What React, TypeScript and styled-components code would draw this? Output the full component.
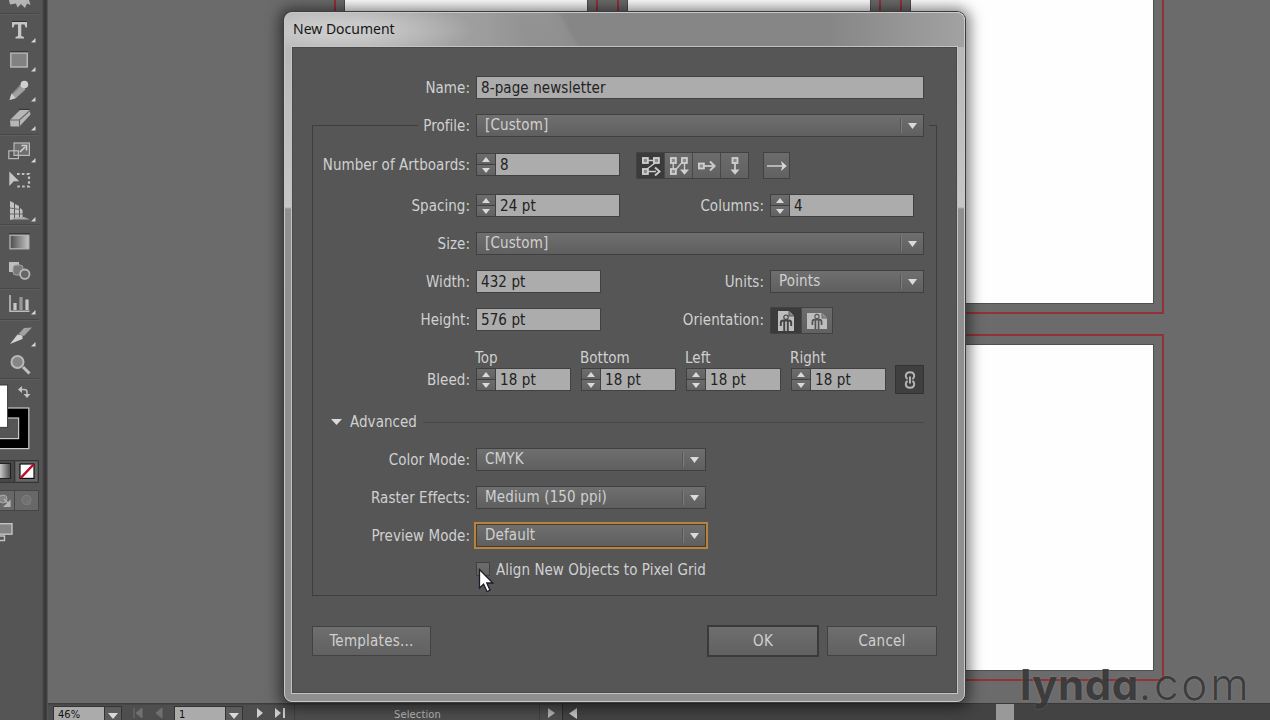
import React from "react";
import styled, { createGlobalStyle, css } from "styled-components";

const GlobalStyle = createGlobalStyle`
  *, *::before, *::after { box-sizing: border-box; }
  body { margin: 0; background: #6b6b6b; overflow: hidden; }
`;

const Screen = styled.div`
  position: relative;
  width: 1270px;
  height: 720px;
  display: flex;
  overflow: hidden;
  font-family: "DejaVu Sans Condensed", "DejaVu Sans", sans-serif;
  font-stretch: condensed;
  font-size: 15px;
  letter-spacing: 0.04px;
  color: #d0d0d0;
  background: #6b6b6b;
`;

/* ---------- tool palette ---------- */

const Toolbar = styled.div`
  width: 48px;
  flex: none;
  display: flex;
  flex-direction: column;
  background: linear-gradient(90deg, #555 0 42px, #464646 43px, #353535 45px, #383838 46px, #5c5c5c 48px);
`;

const ToolSvg = styled.svg`
  display: block;
  flex: none;
`;

const ToolRule = styled.div`
  height: 2px;
  width: 39px;
  flex: none;
  background: #484848;
  border-bottom: 1px solid #5e5e5e;
`;

function Tool({ y, h, corner, children }: { y: number; h: number; corner?: number; children: React.ReactNode }) {
  return (
    <ToolSvg width="42" height={h} viewBox={`0 ${y} 42 ${h}`}>
      {children}
      {corner ? <path d={`M35.5 ${corner} V${corner + 4.5} H31 Z`} fill="#d4d4d4" /> : null}
    </ToolSvg>
  );
}

function ToolPalette() {
  return (
    <Toolbar>
      <Tool y={0} h={13}>
        <path d="M9 0 H29 L30.5 5 L27 3.5 L25 8 L21 4 L17.5 7.5 L16 3.5 L10 4.5 Z" fill="#b5b5b5" />
      </Tool>
      <ToolRule />
      <Tool y={15} h={31} corner={38}>
        <path d="M12 22 H27 V27.5 H25.5 L24.5 24.5 H21.3 V36 L24 37 V38.5 H15.5 V37 L18 36 V24.5 H14.5 L13.5 27.5 H12 Z" fill="#c6c6c6" />
        <path d="M12 21.5 H27" stroke="#333" strokeWidth="1" />
      </Tool>
      <Tool y={46} h={29} corner={67}>
        <rect x="10.8" y="53" width="16.5" height="14" fill="#828282" stroke="#b9b9b9" strokeWidth="1.4" />
        <path d="M10 51.7 H28" stroke="#333" />
      </Tool>
      <Tool y={75} h={29} corner={97}>
        <path d="M9.5 100 L11.5 94 L20.5 84.5 L25.5 89.5 L15.5 98.5 Z" fill="#a0a0a0" />
        <path d="M9.5 100 L11.5 93.5 L15.5 98 Z" fill="#cecece" />
        <circle cx="24.4" cy="84.6" r="3.8" fill="#d0d0d0" />
        <path d="M12.5 94 L20 86.3" stroke="#707070" strokeWidth="1" />
      </Tool>
      <Tool y={104} h={30} corner={126}>
        <path d="M10 120 L20 110 H29.5 L30.5 114.5 L19.5 126.5 H10.5 Z" fill="#b6b6b6" />
        <path d="M10 120 H19.5 L30 110.5 M19.5 120 V126.5" fill="none" stroke="#666" strokeWidth="1.1" />
        <path d="M19 109.3 H29.5" stroke="#333" />
      </Tool>
      <ToolRule />
      <Tool y={136} h={30} corner={158}>
        <rect x="14" y="143" width="15.4" height="12.4" fill="#6e6e6e" stroke="#b9b9b9" strokeWidth="1.2" />
        <rect x="8.8" y="150.8" width="9.6" height="7.8" fill="none" stroke="#b9b9b9" strokeWidth="1.2" />
        <path d="M20 152 L25 147 M21.5 145.5 H26.5 V150.5" fill="none" stroke="#cfcfcf" strokeWidth="1.6" />
      </Tool>
      <Tool y={166} h={30}>
        <path d="M17 174 H29 V186.5 H16" fill="none" stroke="#c0c0c0" strokeWidth="2.2" strokeDasharray="2.6 2.2" />
        <path d="M9.3 171.5 L19.2 181.2 H13.8 L9.3 186 Z" fill="#c4c4c4" />
      </Tool>
      <Tool y={196} h={28} corner={217}>
        <path d="M10 201 L14 203 V219 L10 220 Z M15 204 L19 206 V218 L15 219 Z M20 208 L22.5 210 V217 H20 Z" fill="#c2c2c2" />
        <path d="M10 208 L20 209.5 M10 214 H23" stroke="#6a6a6a" strokeWidth="1.2" />
        <path d="M10 219.6 L18 217 H24 L30 219.6 Z" fill="#aaa" />
      </Tool>
      <ToolRule />
      <Tool y={226} h={29}>
        <defs>
          <linearGradient id="toolGradient">
            <stop offset="0" stopColor="#4c4c4c" />
            <stop offset="1" stopColor="#c4c4c4" />
          </linearGradient>
        </defs>
        <rect x="10" y="235.2" width="18.8" height="13.6" fill="url(#toolGradient)" stroke="#b4b4b4" strokeWidth="1.3" />
        <path d="M9 233.7 H30" stroke="#333" />
      </Tool>
      <Tool y={255} h={33}>
        <rect x="9" y="262" width="10" height="10" fill="#bdbdbd" />
        <rect x="13" y="265" width="10" height="10" rx="3" fill="#7a7a7a" stroke="#a4a4a4" />
        <circle cx="24.8" cy="274.2" r="4.7" fill="#666" stroke="#b8b8b8" strokeWidth="1.8" />
      </Tool>
      <ToolRule />
      <Tool y={290} h={29} corner={310}>
        <path d="M10 295 V311.3 H29.5" fill="none" stroke="#bcbcbc" strokeWidth="1.6" />
        <path d="M13.4 303 H16.6 V310 H13.4 Z M25.4 299.5 H28.6 V310 H25.4 Z" fill="#c6c6c6" />
        <path d="M19.4 297 H22.6 V310 H19.4 Z" fill="#989898" />
      </Tool>
      <ToolRule />
      <Tool y={321} h={29} corner={342}>
        <path d="M10 344 L17.5 334.5 L22.5 335.5 V339 Z" fill="#d2d2d2" />
        <path d="M18.5 334 L24 328 L32 327.5 L24 336 Z" fill="#a2a2a2" />
      </Tool>
      <Tool y={350} h={28}>
        <path d="M23 367 L29.5 373.5" stroke="#c2c2c2" strokeWidth="3" />
        <circle cx="17.5" cy="362" r="6" fill="#868686" stroke="#b8b8b8" strokeWidth="2" />
      </Tool>
      <ToolRule />
      <Tool y={380} h={76}>
        <path d="M20 389.5 H24 Q27 389.5 27 392 V396" fill="none" stroke="#bbb" strokeWidth="1.5" />
        <path d="M18 389.5 L22 386 V393 Z M27 398 L23.6 394 H30.4 Z" fill="#c4c4c4" />
        <rect x="-12" y="408" width="40.8" height="40.6" fill="#000" stroke="#c9c9c9" strokeWidth="1.2" />
        <rect x="-5" y="418" width="23.6" height="20.6" fill="#555" stroke="#c9c9c9" strokeWidth="1.2" />
        <rect x="-5" y="385" width="12.6" height="42.4" fill="#fff" stroke="#3a3a3a" strokeWidth="1" />
      </Tool>
      <Tool y={456} h={31}>
        <defs>
          <linearGradient id="paintGradient">
            <stop offset="0" stopColor="#e0e0e0" />
            <stop offset="1" stopColor="#4a4a4a" />
          </linearGradient>
        </defs>
        <path d="M0 460.5 H38.5 V482.5 H0 M14.5 460 V482" fill="#474747" stroke="#353535" />
        <rect x="15.5" y="461.5" width="22" height="20" fill="#666" />
        <rect x="-2" y="463.5" width="12.5" height="15" fill="url(#paintGradient)" stroke="#222" />
        <rect x="20" y="464" width="14" height="14.4" fill="#fff" stroke="#111" strokeWidth="1.2" />
        <path d="M20.8 477.8 L33.5 464.5" stroke="#c00a25" strokeWidth="2.4" />
      </Tool>
      <Tool y={487} h={30}>
        <path d="M-1 490.5 H38.5 V510.5 H-1 Z M14.5 490 V511" fill="#686868" stroke="#454545" />
        <circle cx="3" cy="499" r="4" fill="#858585" stroke="#aaa" />
        <path d="M10 501 V506.5 H4.5 Z M4 499 L8 503" fill="#b5b5b5" stroke="#b5b5b5" strokeWidth="1.2" />
        <circle cx="26.5" cy="500" r="4.5" fill="#707070" stroke="#838383" />
        <path d="M26.5 500 H31 V504.5 H26.5 Z" fill="#767676" />
      </Tool>
      <Tool y={517} h={40}>
        <rect x="-2" y="523.7" width="14" height="10.5" fill="#858585" stroke="#c2c2c2" strokeWidth="1.4" />
        <path d="M0 536 H4.5 V540.5 H0" fill="none" stroke="#c2c2c2" strokeWidth="1.4" />
      </Tool>
    </Toolbar>
  );
}

/* ---------- document canvas ---------- */

const Workspace = styled.div`
  flex: 1;
  display: flex;
  flex-direction: column;
  min-width: 0;
`;

const Canvas = styled.div`
  position: relative;
  height: 703px;
  flex: none;
  overflow: hidden;
  background: #6b6b6b;
`;

const Bleed = styled.div<{ $x: number; $y: number }>`
  position: absolute;
  left: ${(p) => p.$x}px;
  top: ${(p) => p.$y}px;
  width: 264px;
  height: 347px;
  padding: 9px;
  border: 2px solid #943038;
`;

const Artboard = styled.div`
  width: 100%;
  height: 100%;
  background: #fefefe;
  box-shadow: 0 0 0 1px #505050;
`;

const boardColumns = [334, 617, 900];
const boardRows = [-33, 334];

function Artboards() {
  return (
    <Canvas>
      {boardRows.map((y) =>
        boardColumns.map((x) => (
          <Bleed key={`${x}-${y}`} $x={x - 48} $y={y}>
            <Artboard />
          </Bleed>
        ))
      )}
    </Canvas>
  );
}

/* ---------- status bar ---------- */

const StatusBar = styled.div`
  flex: 1;
  display: flex;
  background: linear-gradient(#3e3e3e 0 1px, #4e4e4e 2px);
  font-size: 11px;
  line-height: 15px;
`;

const StatusField = styled.div<{ $ml: number }>`
  display: flex;
  width: 69px;
  height: 20px;
  flex: none;
  margin: 3px 0 0 ${(p) => p.$ml}px;
  background: #ababab;
  border: 1px solid #333;
  color: #111;
  padding-left: 4px;
`;

const StatusDrop = styled.div`
  width: 17px;
  margin-left: auto;
  background: #5c5c5c;
  border-left: 1px solid #333;
  padding: 6px 0 0 3px;
  svg { display: block; }
`;

const PageButtons = styled.svg`
  display: block;
  flex: none;
`;

const StatusTool = styled.div`
  width: 246px;
  padding: 4px 0 0 99px;
  color: #b8b8b8;
  letter-spacing: 0.15px;
  border-left: 1px solid #404040;
  border-right: 1px solid #404040;
`;

const StatusMore = styled.div`
  width: 22px;
  padding: 5px 0 0 8px;
  svg { display: block; }
`;

const ScrollTrack = styled.div`
  flex: 1;
  display: flex;
  background: #434343;
  border-left: 1px solid #2c2c2c;
  border-top: 1px solid #383838;
  padding-left: 6px;
`;

const ScrollArrow = styled.svg`
  display: block;
  margin-top: 4px;
`;

const ScrollThumb = styled.div`
  width: 18px;
  height: 17px;
  margin-left: 419px;
  background: #999;
`;

function Down({ w = 10, h = 6 }: { w?: number; h?: number }) {
  return (
    <svg width={w} height={h}>
      <path d={`M0 0 H${w} L${w / 2} ${h} Z`} fill="#dadada" />
    </svg>
  );
}

function Up({ w = 8, h = 5 }: { w?: number; h?: number }) {
  return (
    <svg width={w} height={h}>
      <path d={`M0 ${h} H${w} L${w / 2} 0 Z`} fill="#d8d8d8" />
    </svg>
  );
}

function Status() {
  return (
    <StatusBar>
      <StatusField $ml={5}>
        46%
        <StatusDrop>
          <Down />
        </StatusDrop>
      </StatusField>
      <PageButtons width="52" height="17">
        <path d="M12 5 V15 M20 5 V15 L14 10 Z M40 5 V15 L34 10 Z" fill="#707070" stroke="#707070" strokeWidth="1" />
      </PageButtons>
      <StatusField $ml={0}>
        1
        <StatusDrop>
          <Down />
        </StatusDrop>
      </StatusField>
      <PageButtons width="51" height="17">
        <path d="M14 5 V15 L20 10 Z M32 5 V15 L38 10 Z M40 5 H42 V15 H40 Z" fill="#cfcfcf" />
      </PageButtons>
      <StatusTool>Selection</StatusTool>
      <StatusMore>
        <svg width="8" height="10">
          <path d="M0 0 V10 L7 5 Z" fill="#b5b5b5" />
        </svg>
      </StatusMore>
      <ScrollTrack>
        <ScrollArrow width="8" height="11">
          <path d="M8 0 V11 L0 5.5 Z" fill="#c6c6c6" />
        </ScrollArrow>
        <ScrollThumb />
      </ScrollTrack>
    </StatusBar>
  );
}

/* ---------- dialog window ---------- */

const Dialog = styled.div`
  position: absolute;
  left: 284px;
  top: 12px;
  width: 681px;
  height: 690px;
  display: flex;
  flex-direction: column;
  padding: 0 7px 7px;
  border: 1px solid #c8c8c8;
  border-radius: 8px;
  background:
    radial-gradient(ellipse 130px 30px at 60px 17px, rgba(215, 215, 215, 0.7) 25%, rgba(215, 215, 215, 0) 100%) no-repeat 0 0 / 100% 34px,
    linear-gradient(60deg, transparent 0 215px, rgba(255, 255, 255, 0.06) 240px 252px, transparent 256px) no-repeat 0 0 / 100% 34px,
    linear-gradient(90deg, #b2b2b2, #9c9c9c 30%, #868686 42%, #868686 80%, #a2a2a2) no-repeat 0 0 / 100% 34px,
    linear-gradient(#b5b5b5 0, #c6c6c6 194px, #909090 196px, #8f8f8f 100%);
  box-shadow: 0 0 0 1px #3d3d3d, 0 1px 14px 5px rgba(0, 0, 0, 0.5);
`;

const TitleBar = styled.div`
  height: 33px;
  flex: none;
  padding-left: 1px;
  line-height: 32px;
  font-family: "Noto Sans", "Open Sans", sans-serif;
  font-stretch: normal;
  font-size: 14px;
  letter-spacing: 0;
  color: #161616;
`;

const Body = styled.div`
  flex: 1;
  width: 667px;
  margin-left: -1px;
  display: flex;
  flex-direction: column;
  padding: 29px 20px 0 20px;
  background: #565656;
  border: 1px solid #c4c4c4;
  box-shadow: inset 0 0 0 1px #4a4a4a;
`;

const Row = styled.div<{ $gap?: number }>`
  display: flex;
  height: 23px;
  flex: none;
  margin-top: ${(p) => p.$gap ?? 0}px;
`;

const Label = styled.div<{ $w?: number }>`
  width: ${(p) => p.$w ?? 157}px;
  flex: none;
  margin-right: 6px;
  line-height: 25px;
  text-align: right;
  white-space: nowrap;
`;

const Field = styled.div<{ $w: number }>`
  width: ${(p) => p.$w}px;
  height: 23px;
  flex: none;
  padding-left: 4px;
  line-height: 23px;
  letter-spacing: 0.1px;
  color: #222;
  background: #acacac;
  border: 1px solid #414141;
  white-space: nowrap;
`;

const StepperBox = styled.div`
  width: 19px;
  height: 23px;
  flex: none;
  border: 1px solid #404040;
  border-right: 0;
  background: #404040;
  display: grid;
  grid-template-rows: 10px 10px;
  gap: 1px;
`;

const StepButton = styled.div`
  display: flex;
  align-items: center;
  justify-content: center;
  background: linear-gradient(#6d6d6d, #626262);
`;

function NumberField({ value, w }: { value: string; w: number }) {
  return (
    <>
      <StepperBox>
        <StepButton>
          <Up />
        </StepButton>
        <StepButton>
          <Down w={8} h={5} />
        </StepButton>
      </StepperBox>
      <Field $w={w - 19}>{value}</Field>
    </>
  );
}

const SelectBox = styled.div<{ $w: number; $focused?: boolean }>`
  width: ${(p) => p.$w}px;
  height: 23px;
  flex: none;
  display: flex;
  align-items: stretch;
  padding-left: 8px;
  line-height: 20px;
  letter-spacing: 0.14px;
  background: linear-gradient(#6f6f6f, #5f5f5f);
  border: 1px solid #404040;
  ${(p) =>
    p.$focused &&
    css`
      border-color: #4e3a20;
      box-shadow: 0 0 0 2px #b58443;
    `}
`;

const SelectArrow = styled.div`
  width: 22px;
  height: 15px;
  margin: 3px 0 0 auto;
  padding: 5px 0 0 6px;
  border-left: 1px solid #7c7c7c;
  box-shadow: -1px 0 0 #575757;
  svg { display: block; }
`;

function Select({ value, w, focused }: { value: string; w: number; focused?: boolean }) {
  return (
    <SelectBox $w={w} $focused={focused}>
      {value}
      <SelectArrow>
        <Down w={9} h={6} />
      </SelectArrow>
    </SelectBox>
  );
}

const GroupHeader = styled.div`
  display: flex;
  height: 23px;
  flex: none;
  margin-top: 15px;
`;

const HeaderEdge = styled.div<{ $side: "left" | "right" }>`
  height: 12px;
  margin-top: 11px;
  border-top: 1px solid #3e3e3e;
  ${(p) =>
    p.$side === "left"
      ? css`
          width: 106px;
          border-left: 1px solid #3e3e3e;
        `
      : css`
          flex: 1;
          margin-left: 5px;
          border-right: 1px solid #3e3e3e;
        `}
`;

const GroupBody = styled.div`
  height: 459px;
  flex: none;
  display: flex;
  flex-direction: column;
  border: 1px solid #3e3e3e;
  border-top: 0;
`;

const ButtonStrip = styled.div<{ $ml: number }>`
  display: flex;
  height: 27px;
  flex: none;
  margin: -1px 0 0 ${(p) => p.$ml}px;
  border: 1px solid #424242;
`;

const IconButton = styled.div<{ $w: number; $on?: boolean }>`
  width: ${(p) => p.$w}px;
  display: flex;
  align-items: center;
  justify-content: center;
  background: ${(p) => (p.$on ? "#3b3b3b" : "linear-gradient(#6c6c6c, #616161)")};
  & + & { border-left: 1px solid #484848; }
`;

const BleedNames = styled.div`
  display: flex;
  height: 20px;
  flex: none;
  margin: 17px 0 0 162px;
  line-height: 20px;
`;

const BleedName = styled.div`
  width: 105px;
`;

const BleedCell = styled.div`
  display: flex;
  width: 105px;
  flex: none;
`;

const LinkToggle = styled.div`
  width: 29px;
  height: 29px;
  flex: none;
  margin: -3px 0 0 -1px;
  display: flex;
  align-items: center;
  justify-content: center;
  background: #3f3f3f;
  border: 1px solid #333;
`;

const AdvancedRow = styled.div`
  display: flex;
  align-items: center;
  height: 22px;
  flex: none;
  margin: 20px 12px 0 18px;
`;

const AdvancedTitle = styled.div`
  margin: 0 6px 0 8px;
`;

const AdvancedRule = styled.div`
  flex: 1;
  height: 1px;
  background: #474747;
`;

const CheckRow = styled.div`
  display: flex;
  align-items: center;
  height: 22px;
  flex: none;
  margin: 11px 0 0 163px;
`;

const CheckBox = styled.div`
  width: 14px;
  height: 14px;
  margin-right: 6px;
  background: linear-gradient(#6c6c6c, #626262);
  border: 1px solid #404040;
`;

const CheckText = styled.div`
  padding-top: 2px;
`;

const Footer = styled.div`
  display: flex;
  align-items: center;
  height: 32px;
  margin-top: 29px;
`;

const PushButton = styled.div<{ $w: number; $ml?: string; $primary?: boolean }>`
  width: ${(p) => p.$w}px;
  height: ${(p) => (p.$primary ? 32 : 30)}px;
  margin-left: ${(p) => p.$ml ?? "0"};
  display: flex;
  align-items: center;
  justify-content: center;
  letter-spacing: 0.25px;
  background: linear-gradient(#6e6e6e, #616161);
  border: ${(p) => (p.$primary ? "2px solid #3a3a3a" : "1px solid #424242")};
`;

const node = { fill: "#8c8c8c", stroke: "#cfcfcf", strokeWidth: 1.8 };
const wire = { fill: "none", stroke: "#cacaca", strokeWidth: 1.4 };

function GridByRow() {
  return (
    <svg width="20" height="20">
      <path d="M6 4.5 H14 M14 7 L6 13 M6 15.5 H15" {...wire} />
      <rect x="1.9" y="2" width="5" height="5" {...node} />
      <rect x="12.9" y="2" width="5" height="5" {...node} />
      <rect x="1.9" y="13" width="5" height="5" {...node} />
      <path d="M14 11.5 L18.5 15.5 L14 19.5" {...wire} strokeWidth={2} />
    </svg>
  );
}

function GridByColumn() {
  return (
    <svg width="20" height="20">
      <path d="M4.2 7 V13 M6.5 14 L13 6.5 M15.5 6 V14" {...wire} />
      <rect x="1.9" y="2" width="5" height="5" {...node} />
      <rect x="12.9" y="2" width="5" height="5" {...node} />
      <rect x="1.9" y="13" width="5" height="5" {...node} />
      <path d="M11 13.5 H20 L15.5 18.8 Z" fill="#d0d0d0" />
    </svg>
  );
}

function ByRow() {
  return (
    <svg width="20" height="12">
      <path d="M7 6 H17" {...wire} strokeWidth={1.8} />
      <rect x="1.9" y="3.5" width="5" height="5" {...node} />
      <path d="M13 1.5 L17.6 6 L13 10.5" {...wire} strokeWidth={2} />
    </svg>
  );
}

function ByColumn() {
  return (
    <svg width="12" height="20">
      <path d="M6 7 V15" {...wire} strokeWidth={1.8} />
      <rect x="3.5" y="2" width="5" height="5" {...node} />
      <path d="M1.5 13.5 H10.5 L6 18.8 Z" fill="#d0d0d0" />
    </svg>
  );
}

function LeftToRight() {
  return (
    <svg width="22" height="12">
      <path d="M1 6 H19" {...wire} strokeWidth={1.6} />
      <path d="M15 1 L20.8 6 L15 11 L16.3 6 Z" fill="#d6d6d6" />
    </svg>
  );
}

function Portrait() {
  return (
    <svg width="18" height="22">
      <path d="M1 1 H12 L17 6 V21 H1 Z" fill="#bdbdbd" />
      <path d="M12 1 V6 H17" fill="#8a8a8a" stroke="#444" strokeWidth="0.8" />
      <circle cx="9" cy="7.2" r="2.2" fill="#bdbdbd" stroke="#444" strokeWidth="1.2" />
      <path d="M3.8 16 V13 Q3.8 10.5 6.2 10.5 H11.8 Q14.2 10.5 14.2 13 V16 M7.2 11 V21 M10.8 11 V21" fill="none" stroke="#444" strokeWidth="1.9" />
    </svg>
  );
}

function Landscape() {
  return (
    <svg width="22" height="18">
      <path d="M1 1 H16 L21 6 V17 H1 Z" fill="#bdbdbd" />
      <path d="M16 1 V6 H21" fill="#909090" stroke="#555" strokeWidth="0.8" />
      <circle cx="11" cy="4.5" r="2.1" fill="#bdbdbd" stroke="#555" strokeWidth="1.1" />
      <path d="M6.4 13 V10 Q6.4 7.6 8.5 7.6 H13.5 Q15.6 7.6 15.6 10 V13 M9.4 8 V17 M12.6 8 V17" fill="none" stroke="#555" strokeWidth="1.7" />
    </svg>
  );
}

function ChainLink() {
  return (
    <svg width="14" height="20">
      <path
        d="M4.6 9 Q2.8 8.2 2.8 6 Q2.8 2.2 7 2.2 Q11.2 2.2 11.2 6 Q11.2 8.2 9.4 9 M9.4 11 Q11.2 11.8 11.2 14 Q11.2 17.8 7 17.8 Q2.8 17.8 2.8 14 Q2.8 11.8 4.6 11 M7 6.5 V13.5"
        fill="none"
        stroke="#b4b4b4"
        strokeWidth="2"
      />
    </svg>
  );
}

const Pointer = styled.svg`
  position: absolute;
  left: 478px;
  top: 568px;
`;

const Watermark = styled.div`
  position: absolute;
  left: 1020px;
  top: 657px;
  display: flex;
  align-items: baseline;
  font-family: Inter, Lato, sans-serif;
  font-feature-settings: "cv11", "ss03";
  font-stretch: normal;
  line-height: 54px;
  color: rgba(48, 48, 48, 0.85);
  text-shadow: 0 0 2px rgba(190, 190, 190, 0.35);
`;

const Brand = styled.span`
  font-size: 42px;
  font-weight: 700;
  letter-spacing: 0.5px;
`;

const BrandSuffix = styled.span`
  font-size: 44px;
  font-weight: 300;
  letter-spacing: 2.8px;
`;

function NewDocumentDialog() {
  return (
    <Dialog>
      <TitleBar>New Document</TitleBar>
      <Body>
        <Row>
          <Label $w={158}>Name:</Label>
          <Field $w={448}>8-page newsletter</Field>
        </Row>
        <GroupHeader>
          <HeaderEdge $side="left" />
          <Label $w={52}>Profile:</Label>
          <Select value="[Custom]" w={448} />
          <HeaderEdge $side="right" />
        </GroupHeader>
        <GroupBody>
          <Row $gap={16}>
            <Label>Number of Artboards:</Label>
            <NumberField value="8" w={144} />
            <ButtonStrip $ml={16}>
              <IconButton $w={27} $on><GridByRow /></IconButton>
              <IconButton $w={28}><GridByColumn /></IconButton>
              <IconButton $w={28}><ByRow /></IconButton>
              <IconButton $w={28}><ByColumn /></IconButton>
            </ButtonStrip>
            <ButtonStrip $ml={14}>
              <IconButton $w={25}><LeftToRight /></IconButton>
            </ButtonStrip>
          </Row>
          <Row $gap={18}>
            <Label>Spacing:</Label>
            <NumberField value="24 pt" w={144} />
            <Label $w={144}>Columns:</Label>
            <NumberField value="4" w={144} />
          </Row>
          <Row $gap={15}>
            <Label>Size:</Label>
            <Select value="[Custom]" w={448} />
          </Row>
          <Row $gap={15}>
            <Label>Width:</Label>
            <Field $w={125}>432 pt</Field>
            <Label $w={163}>Units:</Label>
            <Select value="Points" w={154} />
          </Row>
          <Row $gap={15}>
            <Label>Height:</Label>
            <Field $w={125}>576 pt</Field>
            <Label $w={163}>Orientation:</Label>
            <ButtonStrip $ml={0}>
              <IconButton $w={30} $on><Portrait /></IconButton>
              <IconButton $w={31}><Landscape /></IconButton>
            </ButtonStrip>
          </Row>
          <BleedNames>
            <BleedName>Top</BleedName>
            <BleedName>Bottom</BleedName>
            <BleedName>Left</BleedName>
            <BleedName>Right</BleedName>
          </BleedNames>
          <Row>
            <Label>Bleed:</Label>
            {["top", "bottom", "left", "right"].map((side) => (
              <BleedCell key={side}>
                <NumberField value="18 pt" w={95} />
              </BleedCell>
            ))}
            <LinkToggle><ChainLink /></LinkToggle>
          </Row>
          <AdvancedRow>
            <Down w={11} h={6} />
            <AdvancedTitle>Advanced</AdvancedTitle>
            <AdvancedRule />
          </AdvancedRow>
          <Row $gap={15}>
            <Label>Color Mode:</Label>
            <Select value="CMYK" w={230} />
          </Row>
          <Row $gap={15}>
            <Label>Raster Effects:</Label>
            <Select value="Medium (150 ppi)" w={230} />
          </Row>
          <Row $gap={15}>
            <Label>Preview Mode:</Label>
            <Select value="Default" w={230} focused />
          </Row>
          <CheckRow>
            <CheckBox />
            <CheckText>Align New Objects to Pixel Grid</CheckText>
          </CheckRow>
        </GroupBody>
        <Footer>
          <PushButton $w={119}>Templates...</PushButton>
          <PushButton $w={112} $ml="auto" $primary>OK</PushButton>
          <PushButton $w={110} $ml="8px">Cancel</PushButton>
        </Footer>
      </Body>
    </Dialog>
  );
}

export default function App() {
  return (
    <Screen>
      <GlobalStyle />
      <ToolPalette />
      <Workspace>
        <Artboards />
        <Status />
      </Workspace>
      <NewDocumentDialog />
      <Pointer width="18" height="26">
        <path d="M1.5 1.5 V20 L5.6 16.2 L9 23.5 L12 22.2 L8.8 15 H14.8 Z" fill="#fff" stroke="#1b1b2c" strokeWidth="1.3" />
      </Pointer>
      <Watermark>
        <Brand>lynda</Brand>
        <BrandSuffix>.com</BrandSuffix>
      </Watermark>
    </Screen>
  );
}
